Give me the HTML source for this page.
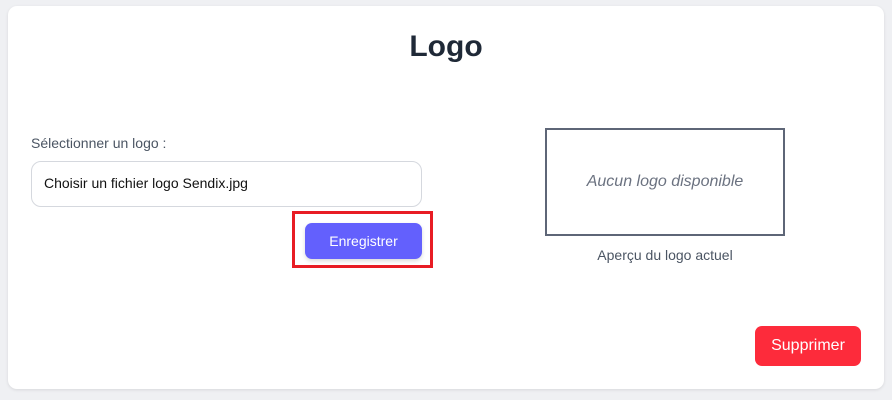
<!DOCTYPE html>
<html><head><style>
body{margin:0;width:892px;height:400px;background:#eff0f3;font-family:"Liberation Sans",sans-serif;position:relative;overflow:hidden}
.card{position:absolute;left:8px;top:6px;width:876px;height:383px;background:#fff;border-radius:9px;box-shadow:0 1px 3px rgba(0,0,0,.1)}
.a{position:absolute}
</style></head><body>
<div class="card"></div>
<div class="a" style="left:0;width:892px;top:30px;text-align:center;font-size:30px;font-weight:bold;color:#1f2937">Logo</div>
<div class="a" style="left:31px;top:135px;font-size:14px;color:#4b5563">Sélectionner un logo :</div>
<div class="a" style="left:31px;top:161px;width:389px;height:44px;border:1px solid #d5d8de;border-radius:10px;box-sizing:content-box"></div>
<div class="a" style="left:44px;top:175px;font-size:14px;color:#111">Choisir un fichier logo Sendix.jpg</div>
<div class="a" style="left:292px;top:211px;width:135px;height:51px;border:3px solid #e81c24"></div>
<div class="a" style="left:305px;top:223px;width:117px;height:36px;background:#6360fd;border-radius:7px;color:#fff;font-size:14px;text-align:center;line-height:36px;box-shadow:0 2px 4px rgba(0,0,0,.15)">Enregistrer</div>
<div class="a" style="left:545px;top:128px;width:236px;height:104px;border:2px solid #5e6677;display:flex;align-items:center;justify-content:center;font-style:italic;font-size:16px;color:#6b7280">Aucun logo disponible</div>
<div class="a" style="left:545px;width:240px;top:247px;text-align:center;font-size:14px;color:#4b5563">Aperçu du logo actuel</div>
<div class="a" style="left:755px;top:326px;width:106px;height:40px;background:#fd2b3b;border-radius:7px;color:#fff;font-size:16px;text-align:center;line-height:40px">Supprimer</div>
</body></html>
